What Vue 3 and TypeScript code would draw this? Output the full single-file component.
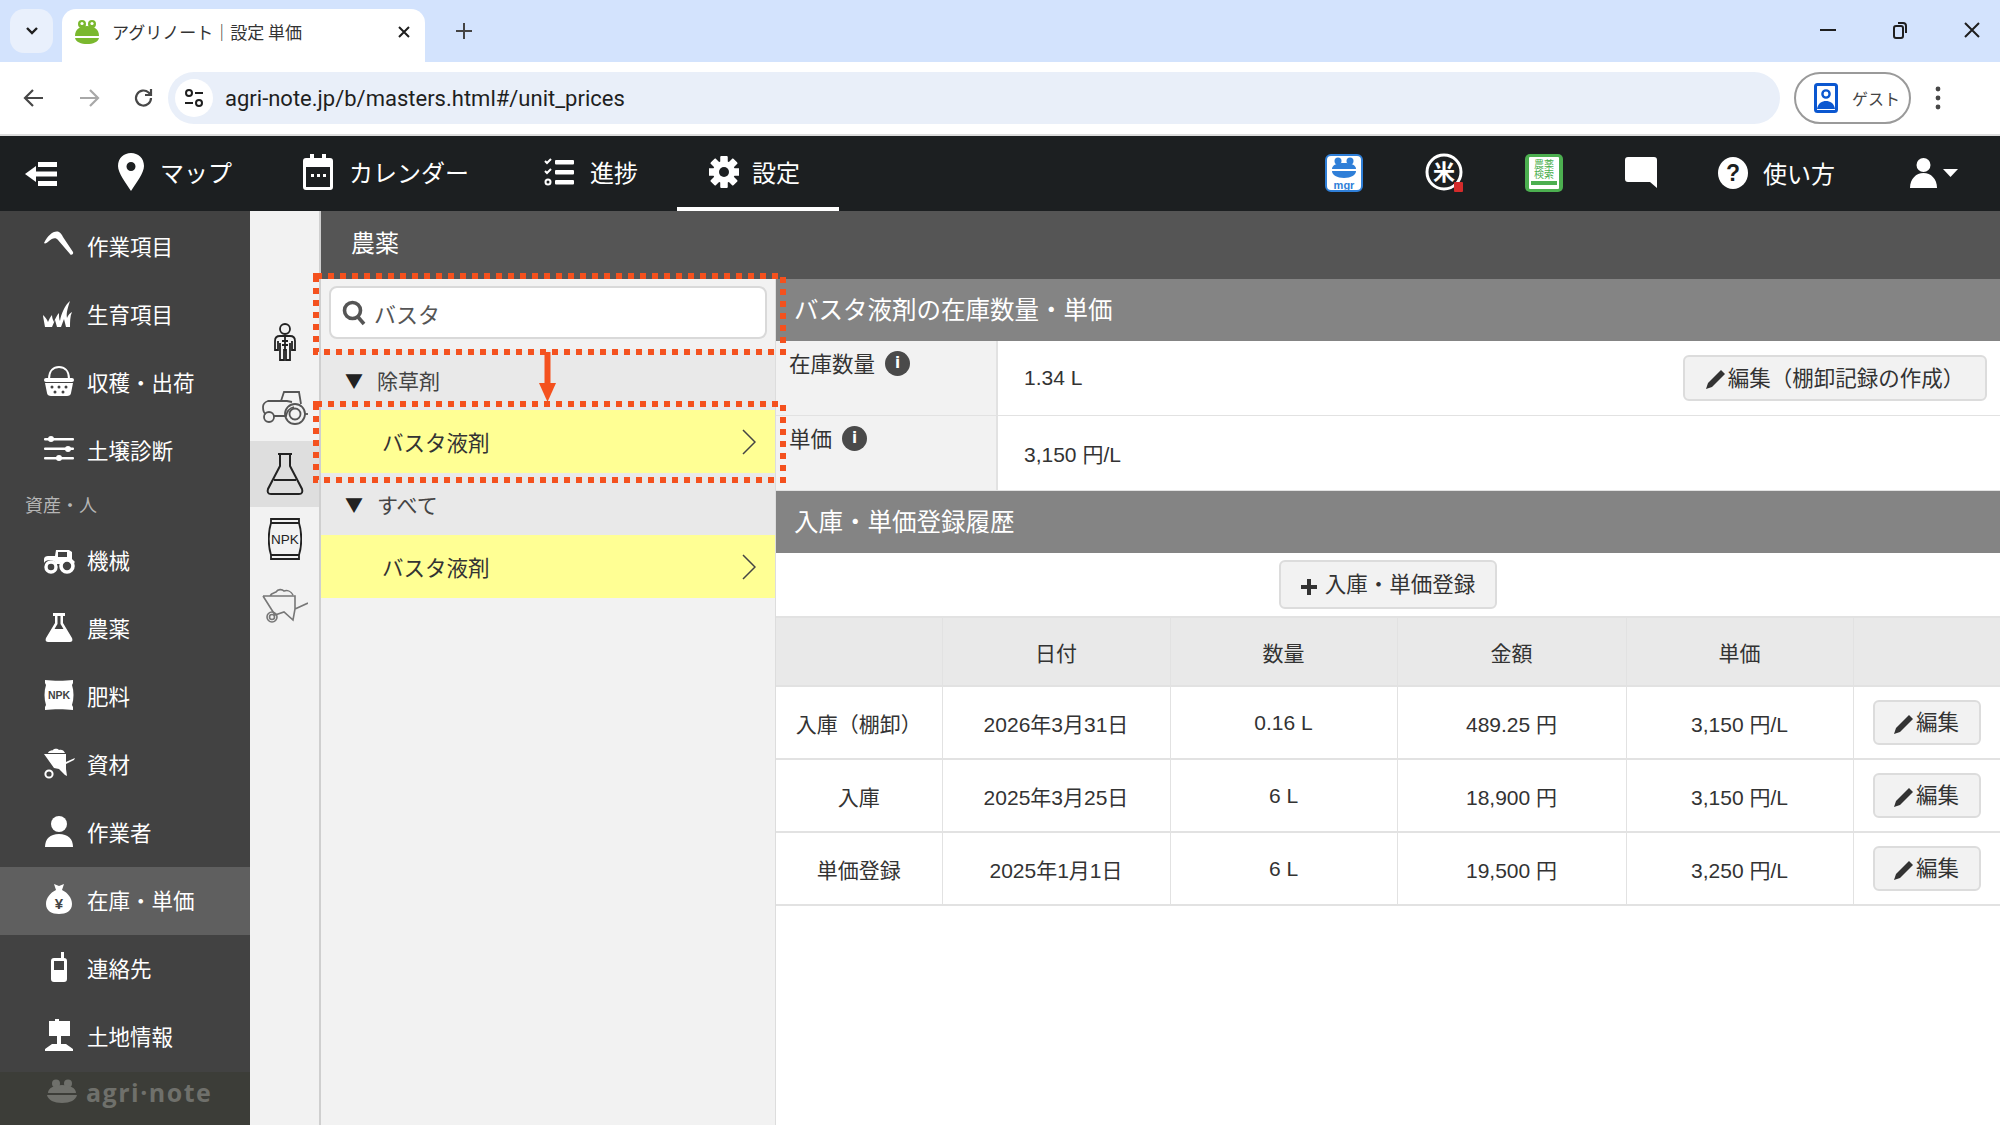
<script setup lang="ts">
interface SideEntry {
  label: string;
  icon?: string;
  active?: boolean;
  heading?: boolean;
}

interface HistoryRow {
  kind: string;
  date: string;
  qty: string;
  amount: string;
  price: string;
}

const icons: Record<string, string> = {
  sickle: '<path fill="#fff" d="M1 14C5 6 11 1 16 3c2 1 3 3 4 5l10 15c1 2-2 4-3 2L15 11c-2-3-6-2-9 1-2 2-4 3-5 2z"/>',
  grass: '<path fill="#fff" d="M2 30C1 24 0 20 0 18c2 2 4 4 5 7 1-2 2-5 4-7 0 3 1 5 2 7 1-3 3-7 5-9 0 4 0 6 1 8 1-7 5-16 10-20-2 6-4 12-3 17 1-3 3-5 5-6-2 4-2 10-2 15h-4l-2-8-3 8h-4l-2-7-3 7z"/>',
  basket: '<path fill="none" stroke="#fff" stroke-width="2" d="M6 14C6 5 11 2 16 2s10 3 10 12"/><rect x="1" y="13" width="30" height="4" rx="2" fill="#fff"/><path fill="#fff" d="M2 18h28l-2 10c0 2-2 3-4 3H8c-2 0-4-1-4-3z"/><g fill="#424242"><circle cx="9" cy="22" r="1.5"/><circle cx="16" cy="22" r="1.5"/><circle cx="23" cy="22" r="1.5"/><circle cx="12" cy="27" r="1.5"/><circle cx="20" cy="27" r="1.5"/></g>',
  sliders: '<g fill="#fff"><rect x="1" y="5" width="30" height="2.6" rx="1"/><rect x="1" y="14.5" width="30" height="2.6" rx="1"/><rect x="1" y="24" width="30" height="2.6" rx="1"/><circle cx="8" cy="6" r="3"/><circle cx="25" cy="16" r="3"/><circle cx="16" cy="25" r="3"/></g>',
  tractor: '<path fill="#fff" d="M13 7h13l3 2v7l3 3-2 2c-3-6-11-6-13 0H13c-1-4-9-6-12-1v-4c0-2 2-3 4-3h7z"/><rect x="15" y="9" width="9" height="5" fill="#424242"/><circle cx="8" cy="24" r="5" fill="none" stroke="#fff" stroke-width="3.4"/><circle cx="24" cy="23" r="6" fill="none" stroke="#fff" stroke-width="3.6"/>',
  flask: '<path fill="#fff" d="M10 2h12v3h-2v7l9 15c1 3 0 4-3 4H6c-3 0-4-1-3-4l9-15V5h-2z"/><path fill="#424242" d="M14.5 5h3v8l3 5h-9l3-5z"/>',
  npk: '<path fill="#fff" d="M2 1c8 1 20 1 28 0v3l-1 2c2 6 2 14 0 20l1 2v3c-8-1-20-1-28 0v-3l1-2C1 20 1 12 3 6L2 4z"/><text x="16" y="20" text-anchor="middle" font-size="10.5" font-weight="700" font-family="Liberation Sans, sans-serif" fill="#424242">NPK</text>',
  barrow: '<path fill="#fff" d="M5 6c1-3 4-2 5-3 2-2 5-1 6 0 2-1 5 0 6 3z"/><path fill="#fff" d="M1 7h22v8l2-1 7-3-1 2-8 4v5l1 7-2-1-6-6-5-1z"/><circle cx="6" cy="27" r="3.6" fill="none" stroke="#fff" stroke-width="2"/>',
  person: '<circle cx="16" cy="9" r="8" fill="#fff"/><path fill="#fff" d="M2 32c0-8 5-13 14-13s14 5 14 13z"/>',
  money: '<path fill="#fff" d="M11 1l5 2 5-2-2 6c6 3 10 8 10 14 0 7-6 10-13 10S3 28 3 21c0-6 4-11 10-14z"/><text x="16" y="26" text-anchor="middle" font-size="15" font-weight="700" font-family="Liberation Sans, sans-serif" fill="#424242">¥</text>',
  phone: '<path fill="#fff" d="M18 1h3v6c2 0 3 1 3 3v18c0 2-1 3-3 3H11c-2 0-3-1-3-3V10c0-2 1-3 3-3h7z"/><rect x="11" y="10" width="10" height="9" fill="#424242"/>',
  sign: '<path fill="#fff" d="M6 2h6V0h4v2h11v15H18v8h5l7 5v2H2v-2l7-5h5v-8H6z"/>',
};

const sideEntries: SideEntry[] = [
  { label: "作業項目", icon: "sickle" },
  { label: "生育項目", icon: "grass" },
  { label: "収穫・出荷", icon: "basket" },
  { label: "土壌診断", icon: "sliders" },
  { label: "資産・人", heading: true },
  { label: "機械", icon: "tractor" },
  { label: "農薬", icon: "flask" },
  { label: "肥料", icon: "npk" },
  { label: "資材", icon: "barrow" },
  { label: "作業者", icon: "person" },
  { label: "在庫・単価", icon: "money", active: true },
  { label: "連絡先", icon: "phone" },
  { label: "土地情報", icon: "sign" },
];

const groups = [
  { name: "除草剤", item: "バスタ液剤" },
  { name: "すべて", item: "バスタ液剤" },
];

const columns = ["", "日付", "数量", "金額", "単価", ""];

const history: HistoryRow[] = [
  { kind: "入庫（棚卸）", date: "2026年3月31日", qty: "0.16 L", amount: "489.25 円", price: "3,150 円/L" },
  { kind: "入庫", date: "2025年3月25日", qty: "6 L", amount: "18,900 円", price: "3,150 円/L" },
  { kind: "単価登録", date: "2025年1月1日", qty: "6 L", amount: "19,500 円", price: "3,250 円/L" },
];

const gearTeeth = [0, 45, 90, 135, 180, 225, 270, 315];
</script>

<template>
  <div class="page">
    <!-- browser chrome -->
    <div class="tabstrip">
      <div class="tab-search">
        <svg width="14" height="10" viewBox="0 0 14 10"><path d="M2 2l5 5 5-5" fill="none" stroke="#1f1f1f" stroke-width="2.4" /></svg>
      </div>
      <div class="tab">
        <svg class="favicon" width="26" height="26" viewBox="0 0 26 26">
          <circle cx="8" cy="5" r="4" fill="#7ab82e" /><circle cx="18" cy="5" r="4" fill="#7ab82e" />
          <circle cx="8" cy="4.5" r="1.6" fill="#fff" /><circle cx="18" cy="4.5" r="1.6" fill="#fff" />
          <path d="M1 17C1 10 6 7 13 7s12 3 12 10z" fill="#7ab82e" />
          <path d="M1 19h24c-1 4-6 6-12 6S2 23 1 19z" fill="#7ab82e" />
        </svg>
        <span class="tab-title">アグリノート｜設定 単価</span>
        <svg class="tab-close" width="14" height="14" viewBox="0 0 14 14"><path d="M2 2l10 10M12 2L2 12" stroke="#1f1f1f" stroke-width="2" /></svg>
      </div>
      <svg class="new-tab" width="18" height="18" viewBox="0 0 18 18"><path d="M9 1v16M1 9h16" stroke="#444" stroke-width="2" /></svg>
      <div class="win-buttons">
        <svg width="16" height="16" viewBox="0 0 16 16"><path d="M0 8h16" stroke="#1f1f1f" stroke-width="2" /></svg>
        <svg width="16" height="18" viewBox="0 0 16 18"><rect x="2" y="5" width="9" height="12" rx="2" fill="none" stroke="#1f1f1f" stroke-width="2" /><path d="M6 2h5c2 0 3 1 3 3v7" fill="none" stroke="#1f1f1f" stroke-width="2" /></svg>
        <svg width="16" height="16" viewBox="0 0 16 16"><path d="M1 1l14 14M15 1L1 15" stroke="#1f1f1f" stroke-width="2" /></svg>
      </div>
    </div>
    <div class="toolbar">
      <svg class="tb-icon" width="22" height="22" viewBox="0 0 22 22"><path d="M20 11H3M10 3l-8 8 8 8" fill="none" stroke="#474747" stroke-width="2.2" /></svg>
      <svg class="tb-icon" width="22" height="22" viewBox="0 0 22 22"><path d="M2 11h17M12 3l8 8-8 8" fill="none" stroke="#a8a8a8" stroke-width="2.2" /></svg>
      <svg class="tb-icon" width="22" height="22" viewBox="0 0 22 22"><path d="M18 11a7.5 7.5 0 1 1-2.4-5.5L18 8M18 2v6h-6" fill="none" stroke="#474747" stroke-width="2.2" /></svg>
      <div class="address">
        <span class="tune">
          <svg width="20" height="20" viewBox="0 0 20 20" fill="none" stroke="#1f1f1f" stroke-width="2"><circle cx="5" cy="5" r="3" /><path d="M11 5h8M1 15h8" /><circle cx="15" cy="15" r="3" /></svg>
        </span>
        <span class="url">agri-note.jp/b/masters.html#/unit_prices</span>
      </div>
      <div class="guest">
        <svg width="24" height="30" viewBox="0 0 24 30"><rect x="1.5" y="1.5" width="21" height="27" rx="2" fill="none" stroke="#0b57d0" stroke-width="3" /><circle cx="12" cy="11" r="3.6" fill="none" stroke="#0b57d0" stroke-width="2.4" /><path d="M3 26c1-6 5-8 9-8s8 2 9 8z" fill="#0b57d0" /></svg>
        <span>ゲスト</span>
      </div>
      <svg class="more" width="6" height="24" viewBox="0 0 6 24"><circle cx="3" cy="3" r="2.4" fill="#474747" /><circle cx="3" cy="12" r="2.4" fill="#474747" /><circle cx="3" cy="21" r="2.4" fill="#474747" /></svg>
    </div>
    <div class="chrome-line"></div>

    <!-- app nav -->
    <nav class="navbar">
      <div class="nav-toggle">
        <svg width="32" height="28" viewBox="0 0 32 28" fill="#fff"><rect x="13" y="2" width="19" height="5" /><rect x="6" y="11.5" width="26" height="5" /><rect x="13" y="21" width="19" height="5" /><path d="M0 14l11-8v16z" /></svg>
      </div>
      <a class="nav-item">
        <svg width="26" height="38" viewBox="0 0 26 38"><path fill="#fff" fill-rule="evenodd" d="M13 0c7 0 13 5 13 13 0 7-8 17-13 25C8 30 0 20 0 13 0 5 6 0 13 0zm0 9a4.500 4.500 0 1 0 0 9 4.500 4.500 0 0 0 0-9z" /></svg>
        <span>マップ</span>
      </a>
      <a class="nav-item">
        <svg width="30" height="36" viewBox="0 0 30 36"><path fill="#fff" fill-rule="evenodd" d="M3 4h4V0h4v4h8V0h4v4h4c2 0 3 1 3 3v26c0 2-1 3-3 3H3c-2 0-3-1-3-3V7c0-2 1-3 3-3zm0 9v20h24V13z" /><g fill="#fff"><rect x="8" y="20" width="3" height="3" /><rect x="14" y="20" width="3" height="3" /><rect x="20" y="20" width="3" height="3" /></g></svg>
        <span>カレンダー</span>
      </a>
      <a class="nav-item">
        <svg width="30" height="28" viewBox="0 0 30 28" fill="#fff"><rect x="11" y="2" width="19" height="4.500" rx="1" /><rect x="11" y="12" width="19" height="4.500" rx="1" /><rect x="11" y="22" width="19" height="4.500" rx="1" /><path d="M1 3l2 2 4-4" fill="none" stroke="#fff" stroke-width="2" /><path d="M1 13l2 2 4-4" fill="none" stroke="#fff" stroke-width="2" /><circle cx="4" cy="24" r="2.500" fill="none" stroke="#fff" stroke-width="2" /></svg>
        <span>進捗</span>
      </a>
      <a class="nav-item nav-active">
        <svg width="30" height="32" viewBox="0 0 30 32">
          <rect v-for="deg in gearTeeth" :key="deg" x="11.500" y="0" width="7" height="32" rx="1" fill="#fff" :transform="`rotate(${deg} 15 16)`" />
          <circle cx="15" cy="16" r="11" fill="#fff" />
          <circle cx="15" cy="16" r="5" fill="#1c1f21" />
        </svg>
        <span>設定</span>
      </a>
      <div class="nav-right">
        <span class="nav-cell">
          <svg width="38" height="38" viewBox="0 0 38 38">
            <rect x="1" y="1" width="36" height="36" rx="5" fill="#fff" stroke="#2f7fd8" stroke-width="2" />
            <circle cx="13" cy="7" r="3.500" fill="#2f7fd8" /><circle cx="25" cy="7" r="3.500" fill="#2f7fd8" />
            <path d="M7 15c0-4 5-6 12-6s12 2 12 6z" fill="#2f7fd8" />
            <path d="M7 17h24c0 4-5 7-12 7S7 21 7 17z" fill="#2f7fd8" />
            <text x="19" y="35" text-anchor="middle" font-size="11" font-weight="700" font-family="Liberation Sans, sans-serif" fill="#2f7fd8">mgr</text>
          </svg>
        </span>
        <span class="nav-cell">
          <svg width="40" height="40" viewBox="0 0 40 40">
            <circle cx="19" cy="19" r="17" fill="#1c1f21" stroke="#fff" stroke-width="3" />
            <text x="19" y="27" text-anchor="middle" font-size="22" font-weight="700" font-family="Noto Sans CJK JP, sans-serif" fill="#fff">米</text>
            <rect x="29" y="29" width="9" height="10" rx="1" fill="#d42b2b" />
          </svg>
        </span>
        <span class="nav-cell">
          <svg width="38" height="38" viewBox="0 0 38 38">
            <rect width="38" height="38" rx="5" fill="#4caf50" />
            <rect x="4" y="3" width="30" height="32" fill="#fff" rx="1" />
            <rect x="6" y="27" width="26" height="4" fill="#4caf50" />
            <text x="19" y="14" text-anchor="middle" font-size="10" font-family="Noto Sans CJK JP, sans-serif" fill="#4caf50">農薬</text>
            <text x="19" y="24" text-anchor="middle" font-size="10" font-family="Noto Sans CJK JP, sans-serif" fill="#4caf50">検索</text>
          </svg>
        </span>
        <span class="nav-cell cell-bubble">
          <svg width="32" height="32" viewBox="0 0 32 32"><path fill="#fff" d="M3 0h26c2 0 3 1 3 3v28l-7-6H3c-2 0-3-1-3-3V3c0-2 1-3 3-3z" /></svg>
        </span>
        <span class="nav-help">
          <svg width="30" height="32" viewBox="0 0 30 32">
            <ellipse cx="15" cy="16" rx="15" ry="16" fill="#fff" />
            <text x="15" y="24" text-anchor="middle" font-size="23" font-weight="700" font-family="Liberation Sans, sans-serif" fill="#1c1f21">?</text>
          </svg>
          <span>使い方</span>
        </span>
        <span class="nav-user">
          <svg width="27" height="30" viewBox="0 0 27 30"><circle cx="13.500" cy="7" r="7" fill="#fff" /><path d="M0 30c0-9 6-15 13.500-15S27 21 27 30z" fill="#fff" /></svg>
          <svg width="15" height="8" viewBox="0 0 15 8"><path d="M0 0h15l-7.500 8z" fill="#fff" /></svg>
        </span>
      </div>
    </nav>

    <div class="main">
      <aside class="sidebar">
        <div class="side-list">
          <template v-for="entry in sideEntries" :key="entry.label">
            <div v-if="entry.heading" class="side-heading">{{ entry.label }}</div>
            <a v-else class="side-item" :class="{ 'side-active': entry.active }">
              <svg class="side-icon" viewBox="0 0 32 32" v-html="icons[entry.icon ?? '']"></svg>
              <span>{{ entry.label }}</span>
            </a>
          </template>
        </div>
        <div class="side-logo">
          <svg width="30" height="25" viewBox="0 0 30 25" fill="#6f706b">
            <circle cx="9" cy="4.500" r="4" /><circle cx="21" cy="4.500" r="4" />
            <path d="M1 14C1 9 7 6 15 6s14 3 14 8z" /><path d="M0 16h30c-1 5-7 8-15 8S1 21 0 16z" />
          </svg>
          <span>agri·note</span>
        </div>
      </aside>

      <div class="icon-rail">
        <div class="rail-item">
          <svg width="26" height="40" viewBox="0 0 26 40" fill="none" stroke="#222" stroke-width="1.800">
            <circle cx="13" cy="6" r="5" />
            <path d="M8 13h10c3 0 5 2 5 5v9h-3v-9M6 18v9H3v-9c0-3 2-5 5-5M8 20v17h4V27h2v10h4V20" />
            <path d="M13 14v12M10 18h6M10 22h6" />
          </svg>
        </div>
        <div class="rail-item">
          <svg width="46" height="34" viewBox="0 0 46 34" fill="none" stroke="#555" stroke-width="1.800">
            <path d="M19 10l3-9h15l2 12M4 23c-3-1-3-4-3-7 0-3 2-5 5-6h19l5 1M11 25h13c1-5 4-8 8-9" />
            <circle cx="7" cy="26" r="5" /><circle cx="33" cy="23" r="10" /><circle cx="33" cy="23" r="5.500" /><path d="M43 23h3" />
          </svg>
        </div>
        <div class="rail-item rail-active">
          <svg width="38" height="42" viewBox="0 0 38 42" fill="none" stroke="#222" stroke-width="2">
            <path d="M12 1h14M14 1v12L2 36c-1 3 0 5 3 5h28c3 0 4-2 3-5L24 13V1M8 27h22" />
          </svg>
        </div>
        <div class="rail-item">
          <svg width="34" height="42" viewBox="0 0 34 42" fill="none" stroke="#222" stroke-width="1.800">
            <path d="M3 1h28v4H3zM3 37h28v4H3zM3 5C0 14 0 28 3 37M31 5c3 9 3 23 0 32" />
            <text x="17" y="26" text-anchor="middle" font-size="13.500" stroke="none" fill="#222" font-family="Liberation Sans, sans-serif">NPK</text>
          </svg>
        </div>
        <div class="rail-item">
          <svg width="46" height="36" viewBox="0 0 46 36" fill="none" stroke="#777" stroke-width="1.600">
            <path d="M8 9c1-3 4-3 6-4 2-3 6-3 8-1 3-1 7 0 9 4M1 9h32v13l13-6M33 22l-2 11-9-8-9 3L1 9" />
            <circle cx="10" cy="30" r="5" /><circle cx="10" cy="30" r="2.500" />
          </svg>
        </div>
      </div>

      <div class="content">
        <header class="content-head">農薬</header>
        <div class="content-body">
          <div class="list-col">
            <div class="search-wrap">
              <div class="search-box">
                <svg width="24" height="26" viewBox="0 0 24 26" fill="none" stroke="#555" stroke-width="3.600"><circle cx="10.500" cy="10.500" r="8" /><path d="M16 17l6 7" /></svg>
                <span>バスタ</span>
              </div>
            </div>
            <div v-for="(group, i) in groups" :key="i" class="group">
              <div class="group-name" :class="{ first: i === 0 }"><span class="tri">▼</span>{{ group.name }}</div>
              <div class="group-item">
                <span>{{ group.item }}</span>
                <svg width="14" height="26" viewBox="0 0 14 26"><path d="M1 1l12 12L1 25" fill="none" stroke="#444" stroke-width="1.500" /></svg>
              </div>
            </div>
          </div>

          <div class="detail-col">
            <h2 class="section-title">バスタ液剤の在庫数量・単価</h2>
            <div class="info-row">
              <div class="info-label">在庫数量<i class="info-dot">i</i></div>
              <div class="info-value">
                <span>1.34 L</span>
                <button class="btn btn-wide">
                  <svg class="pencil" viewBox="0 0 20 20"><path d="M15 1l4 4L6 18l-6 2 2-6z" fill="#333" /></svg>編集（棚卸記録の作成）
                </button>
              </div>
            </div>
            <div class="info-row">
              <div class="info-label">単価<i class="info-dot">i</i></div>
              <div class="info-value"><span>3,150 円/L</span></div>
            </div>
            <h2 class="section-title">入庫・単価登録履歴</h2>
            <div class="add-row">
              <button class="btn btn-add">
                <svg class="plus" viewBox="0 0 16 16"><path d="M6 0h4v6h6v4h-6v6H6v-6H0V6h6z" fill="#333" /></svg>入庫・単価登録
              </button>
            </div>
            <table class="history">
              <colgroup>
                <col style="width: 166px" /><col style="width: 228px" /><col style="width: 227px" /><col style="width: 229px" /><col style="width: 227px" /><col />
              </colgroup>
              <thead>
                <tr><th v-for="(col, i) in columns" :key="i">{{ col }}</th></tr>
              </thead>
              <tbody>
                <tr v-for="row in history" :key="row.date">
                  <td>{{ row.kind }}</td>
                  <td>{{ row.date }}</td>
                  <td>{{ row.qty }}</td>
                  <td>{{ row.amount }}</td>
                  <td>{{ row.price }}</td>
                  <td>
                    <button class="btn btn-edit">
                      <svg class="pencil" viewBox="0 0 20 20"><path d="M15 1l4 4L6 18l-6 2 2-6z" fill="#333" /></svg>編集
                    </button>
                  </td>
                </tr>
              </tbody>
            </table>
          </div>
        </div>
      </div>

      <!-- red annotation overlay -->
      <svg class="annotation" width="480" height="215" viewBox="0 0 480 215">
        <rect x="3" y="3" width="467" height="76" fill="none" stroke="#f4511e" stroke-width="6" stroke-dasharray="6 6" />
        <rect x="3" y="131" width="467" height="76" fill="none" stroke="#f4511e" stroke-width="6" stroke-dasharray="6 6" />
        <path d="M231.500 79h6v34h-6z" fill="#f4511e" />
        <path d="M226 110h17l-8.500 19z" fill="#f4511e" />
      </svg>
    </div>
  </div>
</template>

<style>
html,
body {
  margin: 0;
  overflow: hidden;
  background: #fff;
}
</style>

<style scoped>
.page {
  width: 2000px;
  height: 1125px;
  display: flex;
  flex-direction: column;
  overflow: hidden;
  font-family: "Liberation Sans", "Noto Sans CJK JP", sans-serif;
  font-size: 21px;
  color: #333;
}

/* browser chrome */
.tabstrip {
  height: 62px;
  flex: none;
  background: #d3e3fd;
  display: flex;
  align-items: flex-start;
  position: relative;
}
.tab-search {
  width: 43px;
  height: 44px;
  margin: 9px 0 0 10px;
  background: #e9f0fc;
  border-radius: 14px;
  display: flex;
  align-items: center;
  justify-content: center;
}
.tab {
  width: 363px;
  height: 53px;
  margin: 9px 0 0 9px;
  background: #fff;
  border-radius: 14px 14px 0 0;
  display: flex;
  align-items: center;
  padding: 0 14px 8px 12px;
  box-sizing: border-box;
}
.tab-title {
  font-family: "Noto Sans CJK JP", sans-serif;
  font-size: 17px;
  color: #333;
  margin-left: 12px;
  flex: 1;
}
.new-tab {
  margin: 22px 0 0 30px;
}
.win-buttons {
  margin-left: auto;
  display: flex;
  align-items: center;
  gap: 56px;
  padding: 21px 20px 0 0;
}
.toolbar {
  height: 72px;
  flex: none;
  background: #fff;
  border-radius: 12px 12px 0 0;
  margin-top: 0;
  display: flex;
  align-items: center;
  padding-left: 23px;
}
.tb-icon {
  margin-right: 33px;
}
.tb-icon:nth-child(3) {
  margin-right: 13px;
}
.address {
  width: 1612px;
  height: 52px;
  background: #e9eff9;
  border-radius: 26px;
  display: flex;
  align-items: center;
  padding-left: 7px;
  box-sizing: border-box;
}
.tune {
  width: 38px;
  height: 38px;
  background: #fff;
  border-radius: 50%;
  display: flex;
  align-items: center;
  justify-content: center;
}
.url {
  font-family: Roboto, sans-serif;
  font-size: 22px;
  color: #1f1f1f;
  margin-left: 12px;
}
.guest {
  width: 117px;
  height: 52px;
  margin-left: 14px;
  box-sizing: border-box;
  border: 2px solid #9a9a9a;
  border-radius: 26px;
  display: flex;
  align-items: center;
  gap: 14px;
  padding-left: 18px;
  font-family: "Noto Sans CJK JP", sans-serif;
  font-size: 16px;
  color: #444;
}
.more {
  margin-left: 24px;
}
.chrome-line {
  height: 2px;
  flex: none;
  background: #dcdcdc;
}

/* app nav */
.navbar {
  height: 75px;
  flex: none;
  background: #1c1f21;
  display: flex;
  color: #fff;
  font-family: "Noto Sans CJK JP", sans-serif;
  font-size: 24px;
}
.nav-toggle {
  width: 86px;
  padding-left: 25px;
  box-sizing: border-box;
  display: flex;
  align-items: center;
}
.nav-item {
  display: flex;
  align-items: center;
  gap: 16px;
  padding: 0 39px 0 32px;
  padding-bottom: 4px;
  box-sizing: border-box;
}
.nav-item:nth-of-type(3) {
  margin-left: 4px;
}
.nav-active {
  border-bottom: 4px solid #fff;
  padding-bottom: 0;
  gap: 13px;
}
.nav-right {
  margin-left: auto;
  display: flex;
  align-items: center;
  padding-right: 42px;
  padding-bottom: 2px;
}
.nav-cell {
  width: 100px;
  display: flex;
}
.cell-bubble {
  width: 93px;
}
.nav-help {
  display: flex;
  align-items: center;
  gap: 15px;
  width: 192px;
}
.nav-user {
  display: flex;
  align-items: center;
  gap: 6px;
}

.main {
  flex: 1;
  display: flex;
  min-height: 0;
  position: relative;
}

/* sidebar */
.sidebar {
  width: 250px;
  flex: none;
  background: #424242;
  display: flex;
  flex-direction: column;
  color: #fff;
  font-family: "Noto Sans CJK JP", sans-serif;
}
.side-list {
  padding-top: 2px;
}
.side-item {
  height: 68px;
  display: flex;
  align-items: center;
  gap: 12px;
  padding: 0 0 4px 43px;
  box-sizing: border-box;
  font-size: 21.500px;
}
.side-active {
  background: #5f5f5f;
}
.side-icon {
  width: 32px;
  height: 32px;
  flex: none;
}
.side-heading {
  height: 42px;
  padding-left: 25px;
  font-size: 18px;
  color: #b5b5b5;
  line-height: 38px;
}
.side-logo {
  flex: 1;
  margin-top: 1px;
  background: #3c3d38;
  display: flex;
  align-items: flex-start;
  gap: 9px;
  padding: 7px 0 0 47px;
  color: #6f706b;
  font-family: "Open Sans", sans-serif;
  font-weight: 700;
  font-size: 25px;
  line-height: 26px;
  letter-spacing: 1.500px;
}

/* icon rail */
.icon-rail {
  width: 71px;
  flex: none;
  background: #f2f2f2;
  border-right: 2px solid #cfcfcf;
  box-sizing: border-box;
  padding-top: 99px;
}
.rail-item {
  height: 65.500px;
  display: flex;
  align-items: center;
  justify-content: center;
}
.rail-active {
  background: #dedede;
}

/* content */
.content {
  flex: 1;
  display: flex;
  flex-direction: column;
  min-width: 0;
}
.content-head {
  height: 68px;
  flex: none;
  background: #555;
  color: #fff;
  font-family: "Noto Sans CJK JP", sans-serif;
  font-size: 24px;
  line-height: 62px;
  padding-left: 30px;
}
.content-body {
  flex: 1;
  display: flex;
  min-height: 0;
}
.list-col {
  width: 454px;
  flex: none;
  background: #f2f2f2;
  border-right: 1px solid #ddd;
  font-family: "Noto Sans CJK JP", sans-serif;
}
.search-wrap {
  height: 71px;
  padding: 7px 8px 0 8px;
  box-sizing: border-box;
}
.search-box {
  height: 53px;
  background: #fff;
  border: 2px solid #d9d9d9;
  border-radius: 8px;
  box-sizing: border-box;
  display: flex;
  align-items: center;
  gap: 8px;
  padding-left: 11px;
  font-size: 22px;
  color: #555;
}
.group-name {
  height: 62px;
  background: #e9e9e9;
  display: flex;
  align-items: center;
  padding-left: 24px;
  font-size: 21px;
  color: #444;
}
.group-name.first {
  height: 60px;
}
.tri {
  font-size: 18px;
  margin-right: 14px;
  color: #222;
}
.group-item {
  height: 63px;
  background: #ffff94;
  display: flex;
  align-items: center;
  justify-content: space-between;
  padding: 0 19px 0 61px;
  font-size: 21.500px;
  color: #333;
}
.detail-col {
  flex: 1;
  min-width: 0;
  background: #fff;
  display: flex;
  flex-direction: column;
}
.section-title {
  margin: 0;
  height: 62px;
  flex: none;
  background: #848484;
  color: #fff;
  font-family: "Noto Sans CJK JP", sans-serif;
  font-size: 24.500px;
  font-weight: 400;
  line-height: 60px;
  padding-left: 18px;
}
.info-row {
  height: 75px;
  flex: none;
  display: flex;
  border-bottom: 1px solid #e2e2e2;
  box-sizing: border-box;
}
.info-label {
  width: 222px;
  flex: none;
  background: #f2f2f2;
  border-right: 2px solid #e2e2e2;
  box-sizing: border-box;
  padding: 6px 0 0 13px;
  display: flex;
  align-items: flex-start;
  gap: 10px;
  font-family: "Noto Sans CJK JP", sans-serif;
  font-size: 21.500px;
  line-height: 32px;
  color: #333;
}
.info-dot {
  width: 25px;
  height: 25px;
  margin-top: 4px;
  border-radius: 50%;
  background: #4a4a4a;
  color: #fff;
  font-family: "DejaVu Sans", sans-serif;
  font-style: normal;
  font-weight: 700;
  font-size: 15px;
  line-height: 25px;
  text-align: center;
}
.info-value {
  flex: 1;
  display: flex;
  align-items: center;
  justify-content: space-between;
  padding: 0 13px 0 26px;
  font-size: 21px;
}
.btn {
  background: #f2f2f2;
  border: 2px solid #dcdcdc;
  border-radius: 6px;
  box-sizing: border-box;
  font-family: "Noto Sans CJK JP", sans-serif;
  font-size: 21.500px;
  color: #333;
  display: flex;
  align-items: center;
  justify-content: center;
  padding: 0 0 4px;
}
.pencil {
  width: 20px;
  height: 20px;
  margin: 6px 2px 0 0;
}
.plus {
  width: 16px;
  height: 16px;
  margin: 8px 8px 0 0;
}
.btn-wide {
  width: 304px;
  height: 46px;
}
.add-row {
  height: 63px;
  flex: none;
  display: flex;
  justify-content: center;
  padding-top: 7px;
  box-sizing: border-box;
}
.btn-add {
  width: 218px;
  height: 49px;
}
.history {
  width: 100%;
  table-layout: fixed;
  border-collapse: collapse;
  font-size: 21px;
  text-align: center;
  border-top: 2px solid #e2e2e2;
}
.history th,
.history td {
  border-right: 1px solid #e2e2e2;
  border-bottom: 2px solid #e2e2e2;
  padding: 0;
  font-family: "Liberation Sans", "Noto Sans CJK JP", sans-serif;
  font-weight: 400;
  color: #333;
}
.history th {
  height: 67px;
  background: #e9e9e9;
}
.history td {
  height: 71px;
}
.history td:last-child,
.history th:last-child {
  border-right: none;
}
.btn-edit {
  width: 108px;
  height: 45px;
  margin-left: 19px;
}

.annotation {
  position: absolute;
  left: 313px;
  top: 62px;
}
</style>
